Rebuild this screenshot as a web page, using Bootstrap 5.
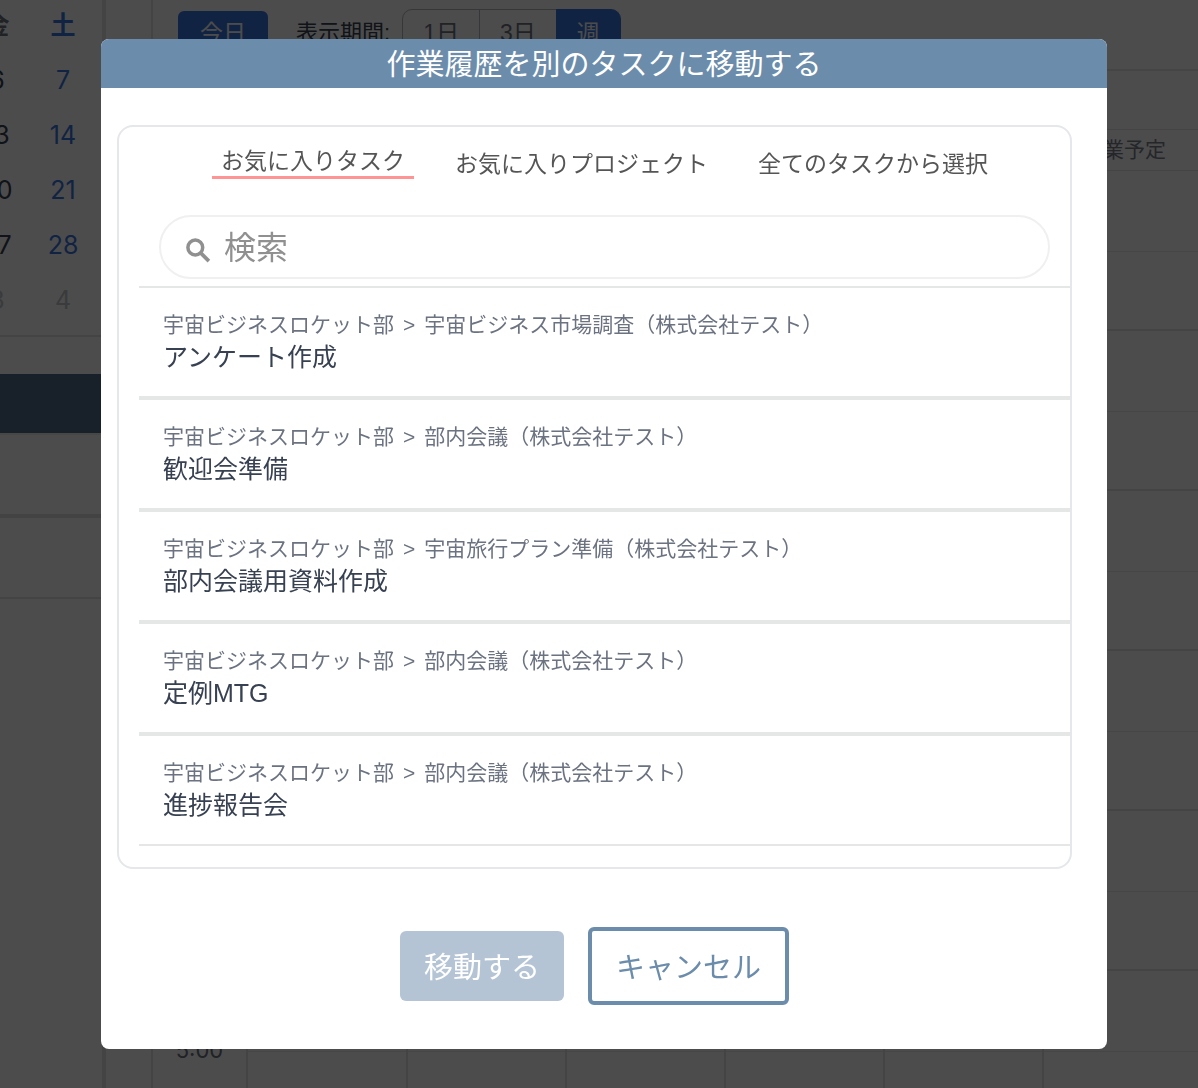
<!DOCTYPE html>
<html lang="ja">
<head>
<meta charset="utf-8">
<meta name="viewport" content="width=device-width, initial-scale=1">
<title>作業履歴を別のタスクに移動する</title>
<link rel="stylesheet" href="https://cdn.jsdelivr.net/npm/bootstrap@5.3.0/dist/css/bootstrap.min.css">
<style>
  body { font-family: "Noto Sans CJK JP", sans-serif; color: #374151; background: #fff; }

  /* calendar page behind the dialog */
  .page { height: 100vh; }
  .side { width: 106px; border-right: 4px solid #e5e5e5; }
  .mini-cal { font: 400 25px/55px Inter, "Noto Sans CJK JP", sans-serif; height: 337px; padding-right: 6px; border-bottom: 2px solid #e5e5e5; }
  .mini-cal > div { flex: 0 0 66px; text-align: center; margin-top: -2px; }
  .mini-cal b { color: #6b7280; font-weight: 700; }
  .mini-cal .sat, .mini-cal .sat b { color: #3b76e1; }
  .mini-cal .out { color: #c4c6ca; }
  .side-active { height: 59px; margin-top: 37px; background: #506b8c; }
  .side-row { height: 85px; border-bottom: 4px solid #e0e0e0; border-top: 2px solid #eee; }
  .side-row + .side-row { height: 81px; border-bottom: 2px solid #e5e5e5; border-top: 0; }
  .gutter { width: 47px; border-right: 2px solid #e5e5e5; }
  .toolbar { height: 71px; padding: 9px 0 0 25px; gap: 28px; font-size: 22px; border-bottom: 2px solid #e8e8e8; }
  .toolbar .btn { font-size: 23px; line-height: 44px; }
  .today { background: #3b76e1; color: #fff; border: 2px solid #3b76e1; margin-top: 2px; padding: 0 20px; }
  .toolbar .today { line-height: 36px; }
  .span-pick { gap: 12px; line-height: 48px; font-family: "Liberation Sans", "Noto Sans CJK JP", sans-serif; }
  .span-pick .btn { border: 1px solid #b5b8bd; color: #6b7280; border-radius: 10px; padding: 0 20px; font-family: inherit; }
  .span-pick .btn.active { background: #3b76e1; border-color: #3b76e1; color: #fff; }
  .cal-row { display: grid; grid-template-columns: 95px 160px repeat(4, 159px) minmax(0, 1fr); flex: none; }
  .cal-row > div { border-right: 2px solid #e3e5e8; }
  .cal-row > div:last-child { border-right: 0; }
  .r-date { height: 59px; border-bottom: 1px solid #e5e5e5; }
  .r-plan { height: 41px; border-bottom: 1px solid #e5e5e5; font-size: 21px; line-height: 36px; text-align: center; color: #7b818c; }
  .r-plan > div { padding-left: 6px; }
  .r-hour { height: 160px; border-bottom: 2px solid #e3e3e3; background: linear-gradient(#ececec, #ececec) right 80px / calc(100% - 95px) 1px no-repeat; }
  .hour { font: 400 22px/158px Inter, sans-serif; text-align: center; color: #6b7280; }

  /* dialog */
  .modal.shade { background: rgba(0, 0, 0, .7); padding-left: 10px; }
  .shade .modal-dialog { max-width: 1006px; margin: 39px auto; }
  .shade .modal-content { border: 0; border-radius: 8px; overflow: hidden; }
  .shade .modal-header { background: #6b8cab; color: #fff; padding: 0 0 2px; border: 0; border-radius: 0; }
  .shade .modal-title { font-size: 29px; line-height: 47px; font-weight: 400; }
  .shade .modal-body { padding: 37px 35px 44px 16px; }
  .picker { border: 2px solid #e5e7eb; border-radius: 16px; padding: 16px 0 21px 20px; }
  .picker-tabs { gap: 32px; margin-bottom: 36px; }
  .picker-tabs .nav-link { font-size: 23px; line-height: 38px; padding: 0 9px; height: 36px; color: #555; }
  .picker-tabs .nav-link.active { line-height: 33px; border-bottom: 3px solid #ff9494; }
  .search { height: 64px; margin: 0 20px 7px; border: 2px solid #f0f0f0; border-radius: 32px; padding: 0 24px; gap: 13px; }
  .search svg { flex: none; margin-top: 6px; }
  .search input { border: 0; padding: 0 0 4px; font-size: 32px; line-height: 48px; box-shadow: none !important; }
  .search input::placeholder { color: #909090; opacity: 1; }
  .task { border: solid #e5e7e7; border-width: 2px 0; padding: 21px 24px; height: 112px; font-family: "Liberation Sans", "Noto Sans CJK JP", sans-serif; }
  .task-path { font-size: 21px; line-height: 32px; color: #6b7280; gap: 9px; }
  .task-name { font-size: 25px; line-height: 32px; color: #374151; }
  .actions { gap: 24px; margin-top: 58px; }
  .actions .btn { font-size: 29px; line-height: 44px; padding: 12px 24px 14px; border: 0; border-radius: 6px; }
  .actions .move { background: #b5c4d5; color: #fff; opacity: 1; }
  .actions .cancel { border: 4px solid #6b8cab; color: #6b8cab; background: #fff; }
</style>
<script src="https://cdn.jsdelivr.net/npm/bootstrap@5.3.0/dist/js/bootstrap.bundle.min.js"></script>
</head>
<body class="overflow-hidden">

<div class="page d-flex overflow-hidden">
  <aside class="side flex-shrink-0 overflow-hidden">
    <div class="mini-cal d-flex justify-content-end">
      <div><b>金</b><br>6<br>13<br>20<br>27<br><span class="out">3</span></div>
      <div class="sat"><b>土</b><br>7<br>14<br>21<br>28<br><span class="out">4</span></div>
    </div>
    <div class="side-active"></div>
    <div class="side-row"></div>
    <div class="side-row"></div>
  </aside>
  <div class="gutter flex-shrink-0"></div>
  <main class="d-flex flex-column flex-grow-1 overflow-hidden">
    <div class="toolbar d-flex align-items-start flex-shrink-0">
      <button type="button" class="btn today">今日</button>
      <div class="span-pick d-flex">
        <span>表示期間:</span>
        <div class="btn-group" role="group" aria-label="表示期間">
          <button type="button" class="btn">1日</button>
          <button type="button" class="btn">3日</button>
          <button type="button" class="btn active">週</button>
        </div>
      </div>
    </div>
    <div class="cal-row r-date"><div></div><div></div><div></div><div></div><div></div><div></div><div></div></div>
    <div class="cal-row r-plan"><div></div><div></div><div></div><div></div><div></div><div></div><div>作業予定</div></div>
    <div class="cal-row r-hour"><div></div><div></div><div></div><div></div><div></div><div></div><div></div></div>
    <div class="cal-row r-hour"><div></div><div></div><div></div><div></div><div></div><div></div><div></div></div>
    <div class="cal-row r-hour"><div></div><div></div><div></div><div></div><div></div><div></div><div></div></div>
    <div class="cal-row r-hour"><div></div><div></div><div></div><div></div><div></div><div></div><div></div></div>
    <div class="cal-row r-hour"><div></div><div></div><div></div><div></div><div></div><div></div><div></div></div>
    <div class="cal-row r-hour"><div class="hour">5:00</div><div></div><div></div><div></div><div></div><div></div><div></div></div>
  </main>
</div>

<div class="modal shade d-block" role="dialog" aria-modal="true" aria-labelledby="moveTitle">
  <div class="modal-dialog">
    <div class="modal-content">
      <div class="modal-header justify-content-center">
        <h1 class="modal-title" id="moveTitle">作業履歴を別のタスクに移動する</h1>
      </div>
      <div class="modal-body">
        <div class="picker">
          <nav class="picker-tabs nav justify-content-center">
            <a class="nav-link active" href="#" aria-current="true">お気に入りタスク</a>
            <a class="nav-link" href="#">お気に入りプロジェクト</a>
            <a class="nav-link" href="#">全てのタスクから選択</a>
          </nav>
          <label class="search d-flex align-items-center">
            <svg width="26" height="26" viewBox="0 0 26 26" fill="none" stroke="#909090" aria-hidden="true"><circle cx="10.300" cy="10.500" r="7.400" stroke-width="3.500"/><path d="M15.400 15.600L23.900 24.100" stroke-width="3.700"/></svg>
            <input type="search" class="form-control" placeholder="検索" aria-label="検索">
          </label>
          <div class="list-group list-group-flush">
            <a href="#" class="task list-group-item-action text-decoration-none">
              <div class="task-path d-flex"><span>宇宙ビジネスロケット部</span><span>&gt;</span><span>宇宙ビジネス市場調査（株式会社テスト）</span></div>
              <div class="task-name">アンケート作成</div>
            </a>
            <a href="#" class="task list-group-item-action text-decoration-none">
              <div class="task-path d-flex"><span>宇宙ビジネスロケット部</span><span>&gt;</span><span>部内会議（株式会社テスト）</span></div>
              <div class="task-name">歓迎会準備</div>
            </a>
            <a href="#" class="task list-group-item-action text-decoration-none">
              <div class="task-path d-flex"><span>宇宙ビジネスロケット部</span><span>&gt;</span><span>宇宙旅行プラン準備（株式会社テスト）</span></div>
              <div class="task-name">部内会議用資料作成</div>
            </a>
            <a href="#" class="task list-group-item-action text-decoration-none">
              <div class="task-path d-flex"><span>宇宙ビジネスロケット部</span><span>&gt;</span><span>部内会議（株式会社テスト）</span></div>
              <div class="task-name">定例MTG</div>
            </a>
            <a href="#" class="task list-group-item-action text-decoration-none">
              <div class="task-path d-flex"><span>宇宙ビジネスロケット部</span><span>&gt;</span><span>部内会議（株式会社テスト）</span></div>
              <div class="task-name">進捗報告会</div>
            </a>
          </div>
        </div>
        <div class="actions d-flex justify-content-center align-items-center">
          <button type="button" class="btn move" disabled>移動する</button>
          <button type="button" class="btn cancel">キャンセル</button>
        </div>
      </div>
    </div>
  </div>
</div>
</body>
</html>
